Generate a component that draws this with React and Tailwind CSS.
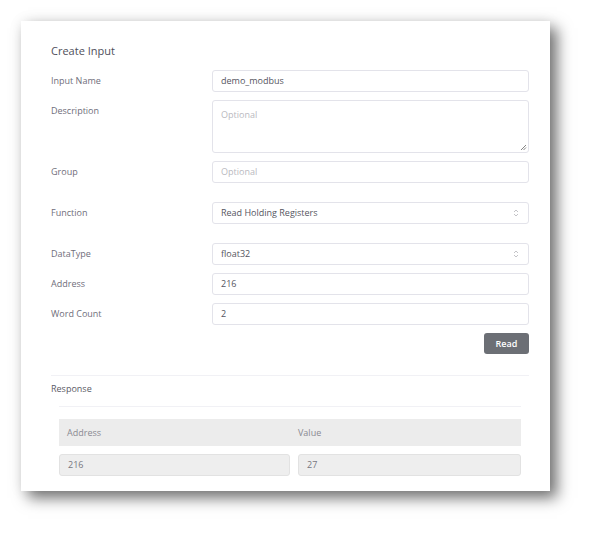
import React from "react";

const font = { fontFamily: '"Open Sans", "Liberation Sans", sans-serif' };

function Arrows() {
  return (
    <svg width="6" height="8" viewBox="0 0 6 8" className="shrink-0">
      <path d="M1 3 L3 1 L5 3" fill="none" stroke="#c4c4c8" strokeWidth="1" />
      <path d="M1 5 L3 7 L5 5" fill="none" stroke="#c4c4c8" strokeWidth="1" />
    </svg>
  );
}

function Row({ label, children, className = "" }) {
  return (
    <div className={"flex items-start " + className}>
      <div className="w-[161px] shrink-0 pt-[5px] text-[9px] leading-[12px] text-[#6f6e7a]">{label}</div>
      <div className="flex-1">{children}</div>
    </div>
  );
}

function Input({ value, placeholder }) {
  return (
    <div className="h-[22px] border border-[#e3e3ea] rounded-[3px] bg-white flex items-center px-[8px] text-[9px]">
      {value ? <span className="text-[#555560]">{value}</span> : <span className="text-[#b9b9c0]">{placeholder}</span>}
    </div>
  );
}

function Select({ value }) {
  return (
    <div className="h-[22px] border border-[#e3e3ea] rounded-[3px] bg-white flex items-center justify-between pl-[8px] pr-[9px] text-[9px]">
      <span className="text-[#555560]">{value}</span>
      <Arrows />
    </div>
  );
}

export default function App() {
  return (
    <div className="w-[592px] h-[533px] bg-white overflow-hidden" style={font}>
      <div className="ml-[21px] mt-[21px] w-[529px] h-[470px] bg-white shadow-[7px_7px_14px_rgba(0,0,0,0.55),0_0_14px_rgba(0,0,0,0.07)] pl-[30px] pr-[21px] pt-[23px]">
        <div className="text-[11px] leading-[14px] text-[#4f4f5a] mb-[12px]">Create Input</div>
        <div className="flex flex-col">
          <Row label="Input Name" className="mb-[8px]">
            <Input value="demo_modbus" />
          </Row>
          <Row label="Description" className="mb-[8px]">
            <div className="relative h-[53px] border border-[#e3e3ea] rounded-[3px] bg-white px-[8px] pt-[7px] text-[9px] text-[#b9b9c0]">
              Optional
              <svg width="7" height="7" viewBox="0 0 7 7" className="absolute right-[1px] bottom-[1px]">
                <path d="M6 1 L1 6 M6 3.5 L3.5 6" stroke="#777" strokeWidth="0.9" />
              </svg>
            </div>
          </Row>
          <Row label="Group" className="mb-[19px]">
            <Input placeholder="Optional" />
          </Row>
          <Row label="Function" className="mb-[19px]">
            <Select value="Read Holding Registers" />
          </Row>
          <Row label="DataType" className="mb-[8px]">
            <Select value="float32" />
          </Row>
          <Row label="Address" className="mb-[8px]">
            <Input value="216" />
          </Row>
          <Row label="Word Count" className="mb-[8px]">
            <Input value="2" />
          </Row>
          <div className="flex justify-end">
            <div className="w-[45px] h-[21px] rounded-[3px] bg-[#6c6f75] text-white text-[9px] font-semibold flex items-center justify-center">
              Read
            </div>
          </div>
        </div>
        <div className="mt-[21px] h-px bg-[#f1f1f5]" />
        <div className="pt-[7px] pb-[11px] text-[9px] leading-[12px] text-[#5a5a66]">Response</div>
        <div className="ml-[8px] mr-[8px]">
          <div className="h-px bg-[#f1f1f5]" />
          <div className="mt-[12px] h-[27px] bg-[#ececec] grid grid-cols-2 items-center text-[9px] text-[#8a8a92]">
            <div className="pl-[8px]">Address</div>
            <div className="pl-[8px]">Value</div>
          </div>
          <div className="mt-[8px] grid grid-cols-[231px_1fr] gap-[8px]">
            <div className="h-[22px] bg-[#eeeeee] border border-[#e2e2e2] rounded-[3px] flex items-center px-[8px] text-[9px] text-[#777780]">216</div>
            <div className="h-[22px] bg-[#eeeeee] border border-[#e2e2e2] rounded-[3px] flex items-center px-[8px] text-[9px] text-[#777780]">27</div>
          </div>
        </div>
      </div>
    </div>
  );
}
